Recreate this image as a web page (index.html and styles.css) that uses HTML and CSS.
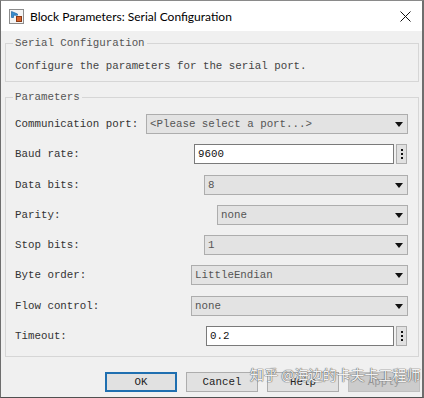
FILE: index.html
```html
<!DOCTYPE html>
<html>
<head>
<meta charset="utf-8">
<link rel="stylesheet" href="styles.css">
</head>
<body>
<div class="window">
  <div class="titlebar">
    <svg class="app-icon" width="15" height="15" viewBox="0 0 15 15">
      <rect x="0.5" y="0.5" width="14" height="14" fill="#f4f4f4" stroke="#8c8c8c"/>
      <path d="M2.5 2.5 L2.5 8.5 L4.5 8.5 L4.5 6.2 L8.5 6.2 L8.5 5 Z" fill="#3a8fd0" stroke="#2a6fa8" stroke-width="0.8"/>
      <rect x="7.5" y="7.5" width="5" height="5" fill="#d9632b" stroke="#8a3a16"/>
    </svg>
    <span class="title">Block Parameters: Serial Configuration</span>
    <svg class="close" width="11" height="11" viewBox="0 0 11 11">
      <path d="M0.5 0.5 L10.5 10.5 M10.5 0.5 L0.5 10.5" stroke="#111" stroke-width="1"/>
    </svg>
  </div>
  <div class="content">
    <fieldset class="group group-desc">
      <legend>Serial Configuration</legend>
      <div class="desc">Configure the parameters for the serial port.</div>
    </fieldset>
    <fieldset class="group group-params">
      <legend>Parameters</legend>
      <div class="rows">
        <div class="row">
          <span class="label">Communication port:</span>
          <div class="select sel-port"><span>&lt;Please select a port...&gt;</span><i class="arrow"></i></div>
        </div>
        <div class="row">
          <span class="label">Baud rate:</span>
          <div class="edit-group edit-baud"><div class="edit">9600</div><div class="dots"><b></b><b></b><b></b></div></div>
        </div>
        <div class="row">
          <span class="label">Data bits:</span>
          <div class="select sel-data"><span>8</span><i class="arrow"></i></div>
        </div>
        <div class="row">
          <span class="label">Parity:</span>
          <div class="select sel-parity"><span>none</span><i class="arrow"></i></div>
        </div>
        <div class="row">
          <span class="label">Stop bits:</span>
          <div class="select sel-data"><span>1</span><i class="arrow"></i></div>
        </div>
        <div class="row">
          <span class="label">Byte order:</span>
          <div class="select sel-wide"><span>LittleEndian</span><i class="arrow"></i></div>
        </div>
        <div class="row">
          <span class="label">Flow control:</span>
          <div class="select sel-wide"><span>none</span><i class="arrow"></i></div>
        </div>
        <div class="row">
          <span class="label">Timeout:</span>
          <div class="edit-group edit-timeout"><div class="edit">0.2</div><div class="dots"><b></b><b></b><b></b></div></div>
        </div>
      </div>
    </fieldset>
    <div class="buttons">
      <div class="btn btn-default">OK</div>
      <div class="btn">Cancel</div>
      <div class="btn">Help</div>
      <div class="btn btn-disabled">Apply</div>
    </div>
  </div>
  <div class="watermark">知乎 @海边的卡夫卡工程师</div>
</div>
</body>
</html>
```
FILE: styles.css
```css
* { box-sizing: border-box; }
html, body {
  margin: 0;
  padding: 0;
  width: 424px;
  height: 398px;
  overflow: hidden;
  background: #f0f0f0;
}
.window {
  position: relative;
  width: 424px;
  height: 398px;
  border-top: 1px solid #8a8a8a;
  border-left: 1px solid #6e6e6e;
  border-right: 2px solid #6e6e6e;
  border-bottom: 1px solid #505050;
  background: #f0f0f0;
  display: flex;
  flex-direction: column;
  overflow: hidden;
}
.titlebar {
  height: 30px;
  background: #ffffff;
  display: flex;
  align-items: center;
  padding-left: 8px;
  padding-right: 11px;
  flex: none;
}
.app-icon { flex: none; }
.title {
  margin-left: 6px;
  font-family: Lato, "Noto Sans", sans-serif;
  font-size: 12px;
  color: #000;
  flex: 1;
  white-space: nowrap;
}
.close { flex: none; }
.content {
  padding-top: 5px;
  font-family: "Liberation Mono", monospace;
  font-size: 10.8px;
  color: #333;
}
.group {
  margin: 0 3px 0 4px;
  border: 1px solid #d6d6d6;
  padding: 9px 10px 8px 9px;
  min-width: 0;
}
.group legend {
  padding: 0 2px;
  margin-left: -2px;
  line-height: 14px;
  color: #555;
}
.desc {
  line-height: 14px;
  color: #444;
  white-space: nowrap;
}
.group-params {
  margin-top: 8px;
  padding-top: 10px;
  padding-bottom: 10px;
}
.rows {
  display: flex;
  flex-direction: column;
  gap: 10.3px;
}
.row {
  display: flex;
  align-items: center;
  height: 20px;
}
.label {
  flex: 1;
  white-space: nowrap;
  color: #333;
}
.select {
  flex: none;
  height: 20px;
  border: 1px solid #adadad;
  background: #e3e3e3;
  display: flex;
  align-items: center;
  padding-left: 3px;
  padding-right: 4px;
  color: #555;
  white-space: nowrap;
}
.select span { flex: 1; }
.arrow {
  width: 0;
  height: 0;
  border-left: 4px solid transparent;
  border-right: 4px solid transparent;
  border-top: 5px solid #111;
  margin-top: 1px;
}
.sel-port { width: 262px; }
.sel-data { width: 204px; }
.sel-parity { width: 191px; }
.sel-wide { width: 217px; }
.edit-group {
  flex: none;
  display: flex;
  gap: 2px;
  margin-right: 1px;
}
.edit-baud { width: 213px; }
.edit-timeout { width: 201px; }
.edit {
  flex: 1;
  height: 20px;
  border: 1px solid #7a7a7a;
  background: #fff;
  line-height: 18px;
  padding-left: 3px;
  color: #111;
}
.dots {
  width: 11px;
  height: 20px;
  border: 1px solid #adadad;
  background: #e1e1e1;
  display: flex;
  flex-direction: column;
  align-items: center;
  justify-content: center;
  gap: 2px;
}
.dots b {
  display: block;
  width: 2px;
  height: 2px;
  background: #111;
}
.buttons {
  margin-top: 15px;
  display: flex;
  justify-content: flex-end;
  gap: 9px;
  padding-right: 2px;
}
.btn {
  width: 72px;
  height: 20px;
  border: 1px solid #adadad;
  background: #e1e1e1;
  display: flex;
  align-items: center;
  justify-content: center;
  color: #222;
}
.btn-default {
  border: 2px solid #1f6fb0;
}
.btn-disabled {
  background: #cccccc;
  border-color: #bfbfbf;
  color: #9a9a9a;
}
.watermark {
  position: absolute;
  left: 249px;
  top: 363px;
  font-family: "Noto Sans CJK SC", sans-serif;
  font-size: 14px;
  line-height: 20px;
  color: rgba(255, 255, 255, 0.92);
  white-space: nowrap;
  text-shadow: 0 0 1px #6a6a6a, 0 0 1px #6a6a6a, 0 0 1px #6a6a6a;
}
```
